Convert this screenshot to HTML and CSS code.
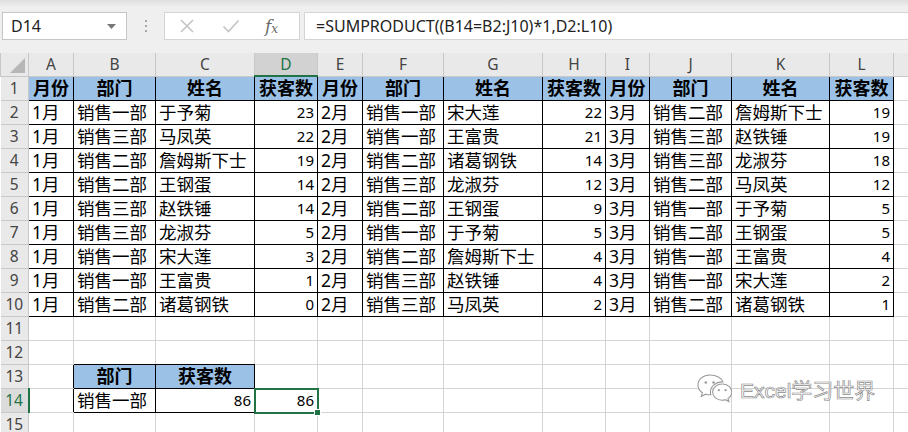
FILE: index.html
```html
<!DOCTYPE html>
<html lang="zh-CN">
  <head>
    <meta charset="UTF-8" />
    <meta name="viewport" content="width=device-width, initial-scale=1.0" />
    <title>获客数汇总</title>
    <link rel="stylesheet" href="styles.css">
  </head>
  <body>
    <!-- Formula bar -->
    <div class="formula-bar">
      <div class="name-box">
        <span>D14</span>
        <svg class="caret" width="9" height="5" viewBox="0 0 9 5"><path d="M0 0h9L4.5 5z" fill="#777"/></svg>
      </div>
      <div class="grip"><i></i><i></i><i></i></div>
      <div class="fx-buttons">
        <svg width="16" height="16" viewBox="0 0 16 16"><path d="M2 2l12 12M14 2L2 14" stroke="#c4c4c4" stroke-width="1.6" fill="none"/></svg>
        <svg width="18" height="16" viewBox="0 0 18 16"><path d="M1.5 8.5l5 5L16.5 2.5" stroke="#c4c4c4" stroke-width="1.6" fill="none"/></svg>
        <span class="fx">f<sub>x</sub></span>
      </div>
      <div class="formula-input">=SUMPRODUCT((B14=B2:J10)*1,D2:L10)</div>
    </div>

    <!-- Worksheet -->
    <table class="sheet">
      <colgroup>
        <col style="width:28px"><col style="width:45px"><col style="width:82px"><col style="width:99px">
        <col style="width:63px"><col style="width:45px"><col style="width:81px"><col style="width:99px">
        <col style="width:63px"><col style="width:44px"><col style="width:82px"><col style="width:98px">
        <col style="width:64px"><col style="width:60px">
      </colgroup>
      <tr class="col-heads">
        <th class="corner"><span class="tri"></span></th>
        <th>A</th><th>B</th><th>C</th><th class="active">D</th><th>E</th><th>F</th>
        <th>G</th><th>H</th><th>I</th><th>J</th><th>K</th><th>L</th><th></th>
      </tr>
      <tr>
        <th class="row-head">1</th>
        <td class="b hd">月份</td><td class="b hd">部门</td><td class="b hd">姓名</td><td class="b hd">获客数</td>
        <td class="b hd">月份</td><td class="b hd">部门</td><td class="b hd">姓名</td><td class="b hd">获客数</td>
        <td class="b hd">月份</td><td class="b hd">部门</td><td class="b hd">姓名</td><td class="b hd">获客数</td>
        <td></td>
      </tr>
      <tr>
        <th class="row-head">2</th>
        <td class="b">1月</td><td class="b">销售一部</td><td class="b">于予菊</td><td class="b num">23</td>
        <td class="b">2月</td><td class="b">销售一部</td><td class="b">宋大莲</td><td class="b num">22</td>
        <td class="b">3月</td><td class="b">销售二部</td><td class="b">詹姆斯下士</td><td class="b num">19</td>
        <td></td>
      </tr>
      <tr>
        <th class="row-head">3</th>
        <td class="b">1月</td><td class="b">销售三部</td><td class="b">马凤英</td><td class="b num">22</td>
        <td class="b">2月</td><td class="b">销售一部</td><td class="b">王富贵</td><td class="b num">21</td>
        <td class="b">3月</td><td class="b">销售三部</td><td class="b">赵铁锤</td><td class="b num">19</td>
        <td></td>
      </tr>
      <tr>
        <th class="row-head">4</th>
        <td class="b">1月</td><td class="b">销售二部</td><td class="b">詹姆斯下士</td><td class="b num">19</td>
        <td class="b">2月</td><td class="b">销售二部</td><td class="b">诸葛钢铁</td><td class="b num">14</td>
        <td class="b">3月</td><td class="b">销售三部</td><td class="b">龙淑芬</td><td class="b num">18</td>
        <td></td>
      </tr>
      <tr>
        <th class="row-head">5</th>
        <td class="b">1月</td><td class="b">销售二部</td><td class="b">王钢蛋</td><td class="b num">14</td>
        <td class="b">2月</td><td class="b">销售三部</td><td class="b">龙淑芬</td><td class="b num">12</td>
        <td class="b">3月</td><td class="b">销售二部</td><td class="b">马凤英</td><td class="b num">12</td>
        <td></td>
      </tr>
      <tr>
        <th class="row-head">6</th>
        <td class="b">1月</td><td class="b">销售三部</td><td class="b">赵铁锤</td><td class="b num">14</td>
        <td class="b">2月</td><td class="b">销售二部</td><td class="b">王钢蛋</td><td class="b num">9</td>
        <td class="b">3月</td><td class="b">销售一部</td><td class="b">于予菊</td><td class="b num">5</td>
        <td></td>
      </tr>
      <tr>
        <th class="row-head">7</th>
        <td class="b">1月</td><td class="b">销售三部</td><td class="b">龙淑芬</td><td class="b num">5</td>
        <td class="b">2月</td><td class="b">销售一部</td><td class="b">于予菊</td><td class="b num">5</td>
        <td class="b">3月</td><td class="b">销售二部</td><td class="b">王钢蛋</td><td class="b num">5</td>
        <td></td>
      </tr>
      <tr>
        <th class="row-head">8</th>
        <td class="b">1月</td><td class="b">销售一部</td><td class="b">宋大莲</td><td class="b num">3</td>
        <td class="b">2月</td><td class="b">销售二部</td><td class="b">詹姆斯下士</td><td class="b num">4</td>
        <td class="b">3月</td><td class="b">销售一部</td><td class="b">王富贵</td><td class="b num">4</td>
        <td></td>
      </tr>
      <tr>
        <th class="row-head">9</th>
        <td class="b">1月</td><td class="b">销售一部</td><td class="b">王富贵</td><td class="b num">1</td>
        <td class="b">2月</td><td class="b">销售三部</td><td class="b">赵铁锤</td><td class="b num">4</td>
        <td class="b">3月</td><td class="b">销售一部</td><td class="b">宋大莲</td><td class="b num">2</td>
        <td></td>
      </tr>
      <tr>
        <th class="row-head">10</th>
        <td class="b">1月</td><td class="b">销售二部</td><td class="b">诸葛钢铁</td><td class="b num">0</td>
        <td class="b">2月</td><td class="b">销售三部</td><td class="b">马凤英</td><td class="b num">2</td>
        <td class="b">3月</td><td class="b">销售二部</td><td class="b">诸葛钢铁</td><td class="b num">1</td>
        <td></td>
      </tr>
      <tr>
        <th class="row-head">11</th>
        <td></td><td></td><td></td><td></td><td></td><td></td><td></td><td></td><td></td><td></td><td></td><td></td><td></td>
      </tr>
      <tr>
        <th class="row-head">12</th>
        <td></td><td class="edge-b"></td><td class="edge-b"></td><td></td><td></td><td></td><td></td><td></td><td></td><td></td><td></td><td></td><td></td>
      </tr>
      <tr>
        <th class="row-head">13</th>
        <td class="edge-r"></td><td class="b hd">部门</td><td class="b hd">获客数</td><td></td><td></td><td></td><td></td><td></td><td></td><td></td><td></td><td></td><td></td>
      </tr>
      <tr>
        <th class="row-head active">14</th>
        <td class="edge-r"></td><td class="b">销售一部</td><td class="b num">86</td>
        <td class="num selected">86<span class="sel"></span><span class="handle"></span></td>
        <td></td><td></td><td></td><td></td><td></td><td></td><td></td><td></td><td></td>
      </tr>
      <tr>
        <th class="row-head">15</th>
        <td></td><td></td><td></td><td></td><td></td><td></td><td></td><td></td><td></td><td></td><td></td><td></td><td></td>
      </tr>
    </table>

    <!-- Account mark -->
    <div class="mark">
      <svg width="36" height="32" viewBox="0 0 36 32">
        <path d="M14 2C7 2 2 6.5 2 12c0 3.2 1.7 6 4.4 7.8L5.3 23.5l4.4-2.3c1.4.4 2.8.6 4.3.6.3 0 .6 0 .9 0-.3-.9-.5-1.9-.5-2.9 0-5.6 5.300-10 11.6-10 .3 0 .6 0 .9 0C25.7 4.9 20.4 2 14 2z" fill="#fff" stroke="#9a9a9a" stroke-width="1.1"/>
        <path d="M26.2 11c-5.4 0-9.6 3.6-9.6 8.1s4.3 8.1 9.6 8.1c1.1 0 2.2-.2 3.2-.5l3.5 1.9-.9-3.1c2.3-1.5 3.8-3.8 3.8-6.4 0-4.5-4.3-8.1-9.6-8.1z" fill="#fff" stroke="#9a9a9a" stroke-width="1.1"/>
        <circle cx="9.8" cy="9.5" r="1.3" fill="#9a9a9a"/>
        <circle cx="17.6" cy="9.5" r="1.3" fill="#9a9a9a"/>
        <circle cx="22.8" cy="17.2" r="1.1" fill="#9a9a9a"/>
        <circle cx="29.6" cy="17.2" r="1.1" fill="#9a9a9a"/>
      </svg>
      <span>Excel学习世界</span>
    </div>
  </body>
</html>
```

FILE: styles.css
```css
/* General Styles */
body {
  margin: 0;
  width: 908px;
  height: 432px;
  overflow: hidden;
  position: relative;
  background: #fff;
  font-family: "Noto Sans", "Noto Sans CJK SC", sans-serif;
  color: #000;
}

/* Formula Bar */
.formula-bar {
  display: flex;
  align-items: flex-start;
  height: 53px;
  box-sizing: border-box;
  padding: 12px 0 0 2px;
  background: linear-gradient(#dedede, #efefef 7px, #efefef);
}

.name-box {
  width: 125px;
  height: 28px;
  box-sizing: border-box;
  display: flex;
  align-items: center;
  justify-content: space-between;
  padding: 0 10px 0 8px;
  background: #fff;
  border: 1px solid #c6c6c6;
  font-size: 16px;
  color: #222;
}

.grip {
  width: 37px;
  height: 28px;
  display: flex;
  flex-direction: column;
  align-items: center;
  justify-content: center;
  gap: 3px;
}

.grip i {
  width: 2px;
  height: 2px;
  background: #a8a8a8;
}

.fx-buttons {
  width: 136px;
  height: 28px;
  box-sizing: border-box;
  display: flex;
  align-items: center;
  gap: 27px;
  padding-left: 14px;
  background: #fff;
  border: 1px solid #d4d4d4;
}

.fx {
  font-family: "DejaVu Serif", "Liberation Serif", serif;
  font-style: italic;
  font-size: 17px;
  color: #6a6a6a;
  margin-left: -2px;
}

.fx sub {
  font-size: 12px;
  vertical-align: -1px;
}

.formula-input {
  flex: 1;
  height: 28px;
  box-sizing: border-box;
  margin-left: 4px;
  padding: 0 0 0 11px;
  background: #fff;
  border: 1px solid #d4d4d4;
  border-right: none;
  font-size: 16px;
  line-height: 26px;
  color: #222;
  white-space: nowrap;
}

/* Worksheet Grid */
.sheet {
  border-collapse: collapse;
  table-layout: fixed;
  width: 953px;
}

.sheet tr {
  height: 24px;
}

.sheet th,
.sheet td {
  padding: 0;
  border: 1px solid #d4d4d4;
  white-space: nowrap;
  overflow: hidden;
}

.sheet td {
  font-size: 17.5px;
  line-height: 20px;
  padding-left: 3px;
}

.col-heads {
  height: 23px !important;
}

.col-heads th {
  background: #e9e9e9;
  border-color: #c8c8c8;
  border-top: none;
  font-weight: normal;
  font-size: 15.5px;
  color: #444;
}

.col-heads th.active {
  background: #d2d2d2;
  color: #217346;
  border-bottom: 2px solid #217346;
}

.corner {
  position: relative;
}

.tri {
  position: absolute;
  right: 3px;
  bottom: 3px;
  width: 0;
  height: 0;
  border-left: 15px solid transparent;
  border-bottom: 15px solid #b6b6b6;
}

.row-head {
  background: #e9e9e9;
  border-color: #c8c8c8 !important;
  border-left: none !important;
  font-weight: normal;
  font-size: 15.5px;
  color: #444;
}

.row-head.active {
  background: #dcdcdc;
  color: #217346;
  border-right: 2px solid #217346 !important;
}

/* Bordered data cells */
.sheet td.b {
  border-color: #000;
}

.sheet td.edge-r {
  border-right-color: #000;
}

.sheet td.edge-b {
  border-bottom-color: #000;
}

.sheet td.hd {
  background: #9bc2e6;
  font-weight: bold;
  font-size: 18px;
  text-align: center;
  padding-left: 0;
}

.sheet td.num {
  text-align: right;
  padding: 0 3px 0 0;
  font-size: 15px;
}

/* Active cell */
.sheet td.selected {
  position: relative;
  overflow: visible;
}

.sel {
  position: absolute;
  left: -1px;
  top: -1px;
  right: -2px;
  bottom: -2px;
  border: 2px solid #217346;
}

.handle {
  position: absolute;
  right: -4px;
  bottom: -4px;
  width: 5px;
  height: 5px;
  background: #217346;
  border: 1px solid #fff;
}

/* Account mark */
.mark {
  position: absolute;
  left: 696px;
  top: 373px;
  display: flex;
  align-items: center;
  gap: 8px;
}

.mark span {
  font-family: "Liberation Sans", "Noto Sans CJK SC", sans-serif;
  font-size: 21px;
  color: #fff;
  -webkit-text-stroke: 0.7px #8c8c8c;
}
```
